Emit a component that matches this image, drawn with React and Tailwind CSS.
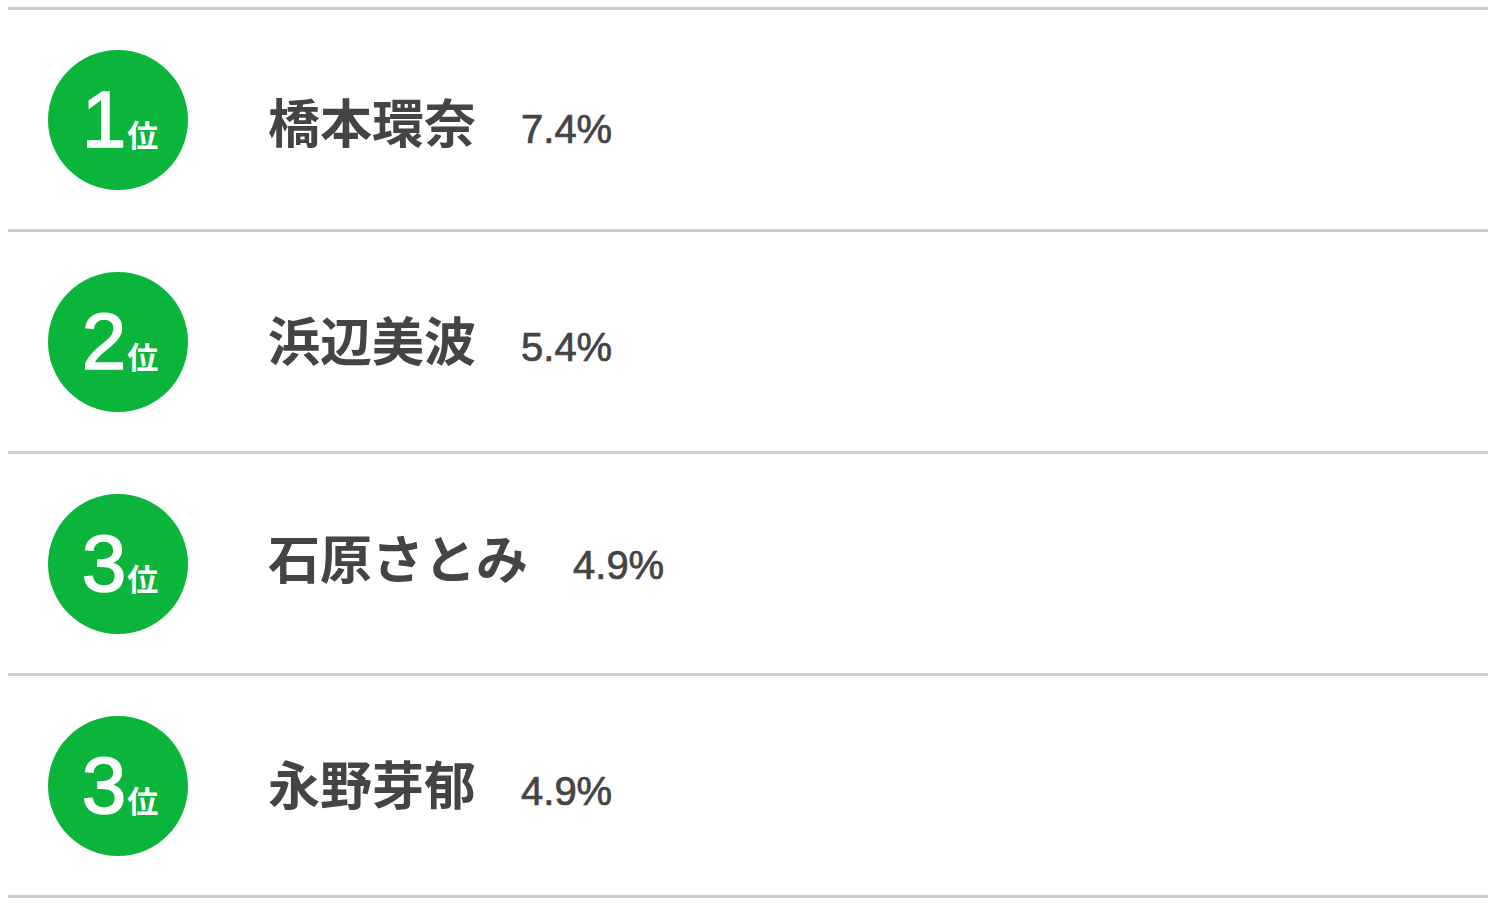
const rows = [
  { rank: "1", name: "橋本環奈", pct: "7.4%", shift: "mt-[10px]" },
  { rank: "2", name: "浜辺美波", pct: "5.4%", shift: "mt-[2px]" },
  { rank: "3", name: "石原さとみ", pct: "4.9%", shift: "mt-[-6px]" },
  { rank: "3", name: "永野芽郁", pct: "4.9%", shift: "mt-[2px]" },
];

export default function App() {
  return (
    <div
      className="bg-white w-[1492px] h-[906px] pt-[7px] pl-[8px] pr-[4px]"
      style={{ fontFamily: '"Liberation Sans", "Noto Sans CJK JP", sans-serif' }}
    >
      <div className="border-b-[3px] border-[#cccccc]">
        {rows.map((r, i) => (
          <div
            key={i}
            className="border-t-[3px] border-[#cccccc] h-[222px] flex items-center pl-[40px]"
          >
            <div className="w-[140px] h-[140px] rounded-full bg-[#0bb53c] flex items-center justify-center text-white shrink-0">
              <span className="flex items-baseline leading-none pl-[4px]">
                <span className="text-[80px] leading-none [-webkit-text-stroke:1.6px_#ffffff]">{r.rank}</span>
                <span className="text-[31px] font-bold leading-none ml-[1px]">位</span>
              </span>
            </div>
            <div className={`ml-[80px] flex items-baseline text-[#444444] ${r.shift}`}>
              <span className="text-[52px] font-bold leading-none">{r.name}</span>
              <span className="text-[40px] leading-none ml-[45px] [-webkit-text-stroke:0.7px_#444444]">{r.pct}</span>
            </div>
          </div>
        ))}
      </div>
    </div>
  );
}
